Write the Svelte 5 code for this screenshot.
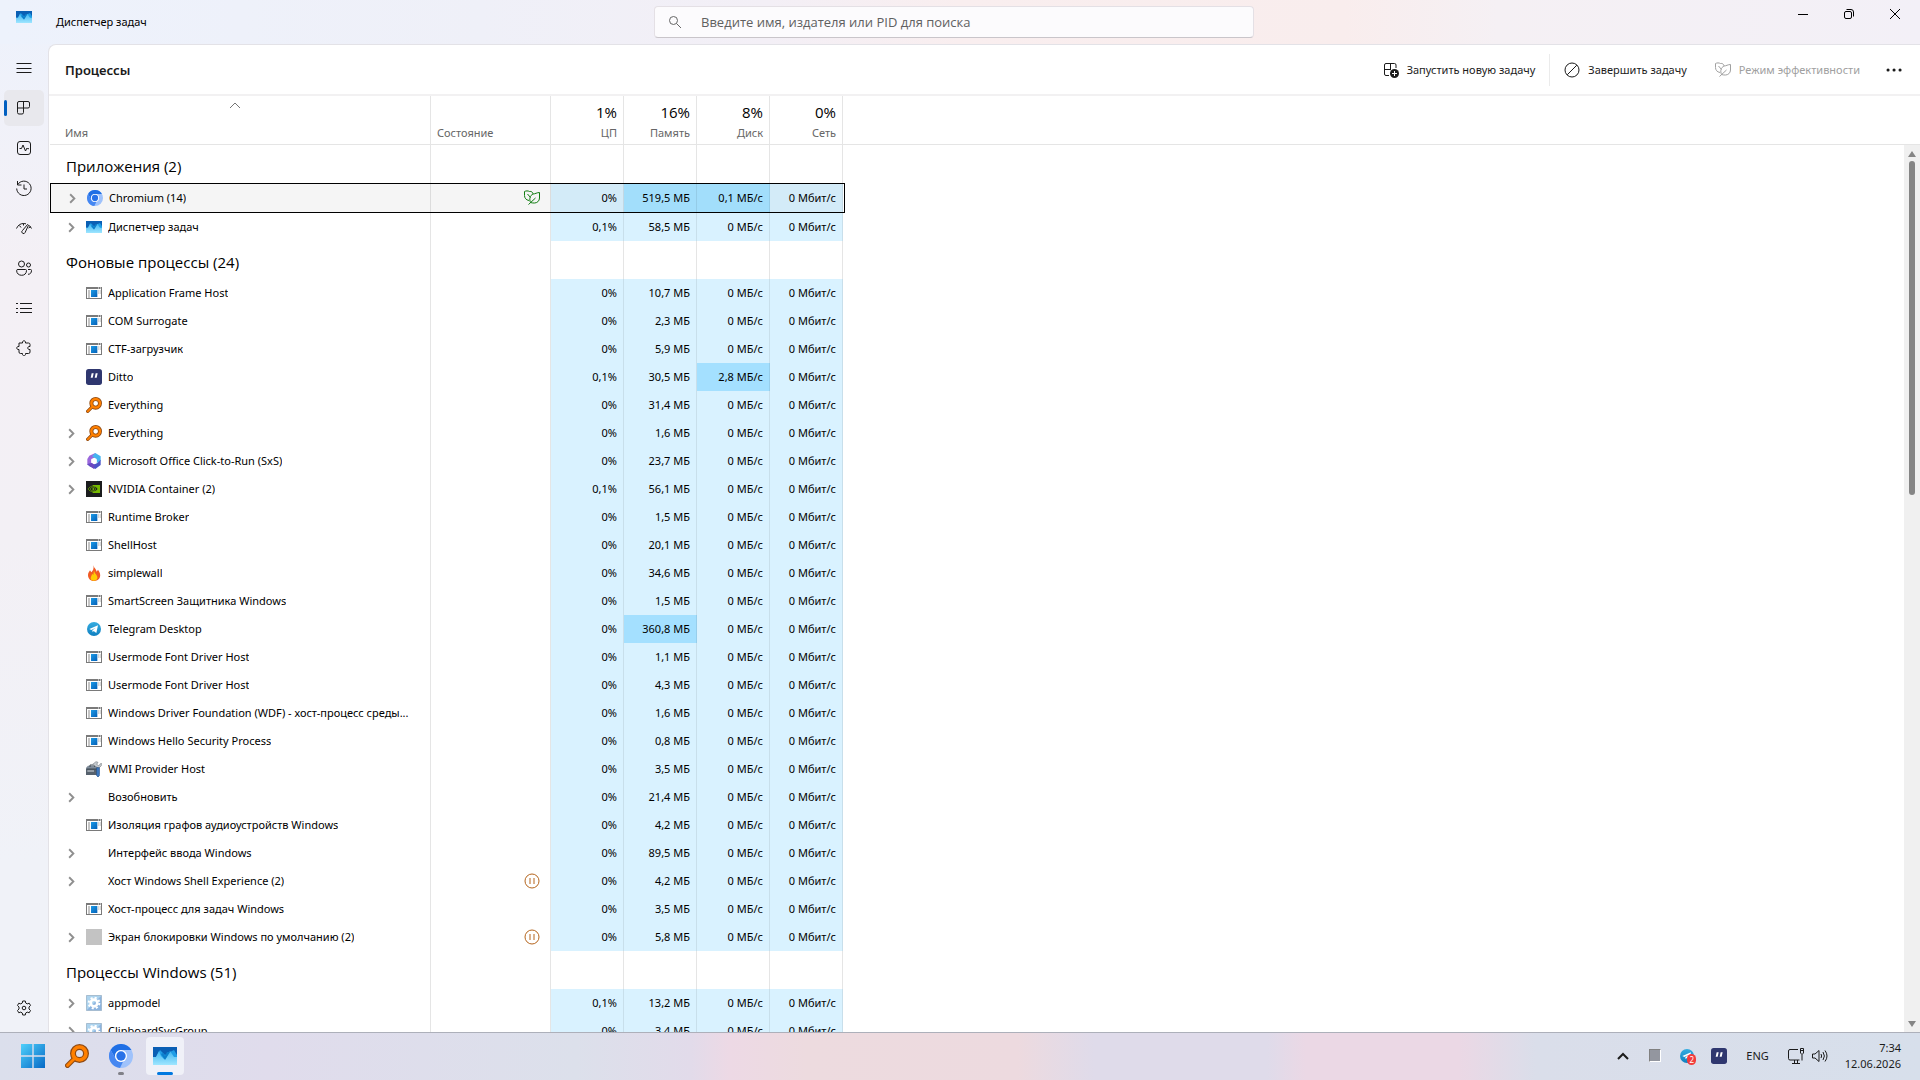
<script>
    let search = $state("")
    let page = $state("processes")
    let selected = $state("Chromium (14)")

    const pages = [
        { id: "processes", title: "Процессы" },
        { id: "performance", title: "Производительность" },
        { id: "history", title: "Журнал приложений" },
        { id: "startup", title: "Автозагрузка приложений" },
        { id: "users", title: "Пользователи" },
        { id: "details", title: "Подробности" },
        { id: "services", title: "Службы" },
    ]

    const columns = [
        { total: "1%", title: "ЦП" },
        { total: "16%", title: "Память" },
        { total: "8%", title: "Диск" },
        { total: "0%", title: "Сеть" },
    ]

    // hot = indexes of the value cells with a darker background
    function proc(name, icon, expand, cpu, mem, disk = "0", status = "", hot = []) {
        return { name, icon, expand, status, hot, cells: [cpu + "%", mem + " МБ", disk + " МБ/с", "0 Мбит/с"] }
    }

    const groups = [
        {
            title: "Приложения (2)",
            rows: [
                proc("Chromium (14)", "chromium", true, "0", "519,5", "0,1", "leaf", [1, 2]),
                proc("Диспетчер задач", "taskmgr", true, "0,1", "58,5"),
            ],
        },
        {
            title: "Фоновые процессы (24)",
            rows: [
                proc("Application Frame Host", "exe", false, "0", "10,7"),
                proc("COM Surrogate", "exe", false, "0", "2,3"),
                proc("CTF-загрузчик", "exe", false, "0", "5,9"),
                proc("Ditto", "ditto", false, "0,1", "30,5", "2,8", "", [2]),
                proc("Everything", "everything", false, "0", "31,4"),
                proc("Everything", "everything", true, "0", "1,6"),
                proc("Microsoft Office Click-to-Run (SxS)", "office", true, "0", "23,7"),
                proc("NVIDIA Container (2)", "nvidia", true, "0,1", "56,1"),
                proc("Runtime Broker", "exe", false, "0", "1,5"),
                proc("ShellHost", "exe", false, "0", "20,1"),
                proc("simplewall", "flame", false, "0", "34,6"),
                proc("SmartScreen Защитника Windows", "exe", false, "0", "1,5"),
                proc("Telegram Desktop", "telegram", false, "0", "360,8", "0", "", [1]),
                proc("Usermode Font Driver Host", "exe", false, "0", "1,1"),
                proc("Usermode Font Driver Host", "exe", false, "0", "4,3"),
                proc("Windows Driver Foundation (WDF) - хост-процесс среды...", "exe", false, "0", "1,6"),
                proc("Windows Hello Security Process", "exe", false, "0", "0,8"),
                proc("WMI Provider Host", "toolbox", false, "0", "3,5"),
                proc("Возобновить", "none", true, "0", "21,4"),
                proc("Изоляция графов аудиоустройств Windows", "exe", false, "0", "4,2"),
                proc("Интерфейс ввода Windows", "none", true, "0", "89,5"),
                proc("Хост Windows Shell Experience (2)", "none", true, "0", "4,2", "0", "paused"),
                proc("Хост-процесс для задач Windows", "exe", false, "0", "3,5"),
                proc("Экран блокировки Windows по умолчанию (2)", "gray", true, "0", "5,8", "0", "paused"),
            ],
        },
        {
            title: "Процессы Windows (51)",
            rows: [
                proc("appmodel", "service", true, "0,1", "13,2"),
                proc("ClipboardSvcGroup", "service", true, "0", "3,4"),
            ],
        },
    ]
</script>

{#snippet line(name)}
    <svg class="line" viewBox="0 0 16 16" aria-hidden="true">
        {#if name === "menu"}
            <path d="M.5 3.5h15M.5 8.5h15M.5 12.5h15" />
        {:else if name === "processes"}
            <path d="M3 1.5h9q1.5 0 1.5 1.5v3.5q0 1.5-1.5 1.5H7.5v4.5q0 1.5-1.5 1.5H3q-1.5 0-1.5-1.5V3q0-1.5 1.5-1.5zM1.5 8h6M7.5 1.5V8" />
        {:else if name === "performance"}
            <rect x="1.5" y="1.5" width="13" height="13" rx="2.5" />
            <path d="M3.5 8.5h2L7 5l2.5 6L11 8l.6.7H13" />
        {:else if name === "history"}
            <path d="M1.8 4.5A7.2 7.2 0 1 1 .7 8.5M1.5 1v4h4M8 4.5V9h3" />
        {:else if name === "startup"}
            <path d="M.5 8.5C2 5 4.5 3.5 7.5 3.5c1 0 1.8.1 2.5.4M13 5.5c1 .7 1.8 1.7 2.5 3M3.5 5.5l1.5 2M7.5 3.5v2M11.5 4.5l-5 6a1.7 1.7 0 1 0 2.6 2L12.5 5.2zM12.5 8 15 6.5" />
        {:else if name === "users"}
            <circle cx="5.5" cy="4" r="3" />
            <circle cx="12.5" cy="5" r="2" />
            <path d="M2 9.5h7.5q1 0 1 1c0 3-2 4.8-4.8 4.8S.6 13.5.6 10.5q0-1 1.4-1zM12 9.5h2.5q1 0 1 1c0 2.4-1.3 3.8-3.5 3.8" />
        {:else if name === "details"}
            <path d="M4 3.5h12M4 8.5h12M4 12.5h12M0 3.5h2M0 8.5h2M0 12.5h2" />
        {:else if name === "services"}
            <path d="M3 3h3.5c-.5-3 3.5-3 3 0h3q1.5 0 1.5 1.5v2c-3-.5-3 3.5 0 3V12q0 1.5-1.5 1.5h-3c.5 3-3.5 3-3 0h-2Q3 13.5 3 12V9.5c-3 .5-3-3.5 0-3z" />
        {:else if name === "settings"}
            <path d="M6.7 1h2.6l.4 2 1.5.9 2-.7 1.3 2.2L13 7v2l1.5 1.5-1.3 2.3-2-.7-1.5.9-.4 2H6.7l-.4-2-1.5-.9-2 .7-1.3-2.3L3 9V7L1.5 5.4l1.3-2.2 2 .7L6.3 3z" />
            <circle cx="8" cy="8" r="1.8" />
        {:else if name === "search"}
            <circle cx="6.5" cy="6.5" r="4" />
            <path d="m9.5 9.5 4.5 4.5" />
        {:else if name === "run"}
            <path d="M6 13.5H3q-1.5 0-1.5-1.5V3q0-1.5 1.5-1.5h8.5Q13 1.5 13 3v3M1.5 7.5H8M7.5 1.5v6" />
            <circle cx="11.5" cy="11.5" r="4.5" fill="#1b1b1b" stroke="none" />
            <path d="M11.5 9v5M9 11.5h5" stroke="#fff" />
        {:else if name === "end"}
            <circle cx="8" cy="8" r="7" />
            <path d="m3.2 12.8 9.6-9.6" />
        {:else if name === "leaf"}
            <path d="M5 10.5C2 10 .5 8 .5 5.5v-4C2 .7 4 .7 5.5 1.5 7.5 1.2 8.5 2 9 3.8M6.5 12.5C5 9 6 5.5 9 4c2 0 4-1.5 6.500-1.500V8c0 3-2.500 5-5 5-1.500 0-2.500 0-4-.5zM4.500 14.500 11.500 8M3.500 4l3 3.500" />
        {:else if name === "more"}
            <path d="M2 8h.1M8 8h.1M14 8h.1" stroke-width="3" stroke-linecap="round" />
        {:else if name === "minimize"}
            <path d="M3 8.5h10" />
        {:else if name === "restore"}
            <rect x="3.5" y="5.5" width="7" height="7" rx="1.5" />
            <path d="M5.5 3.5H10q2.5 0 2.5 2.5v4.5" />
        {:else if name === "close"}
            <path d="m3 3 10 10M13 3 3 13" />
        {:else if name === "up"}
            <path d="m3 11 5-5 5 5" />
        {:else if name === "right"}
            <path d="m5.5 3.5 4.5 4.5-4.5 4.5" />
        {:else if name === "paused"}
            <circle cx="8" cy="8" r="7" />
            <path d="M6 5v6M10 5v6" />
        {:else if name === "network"}
            <path d="M10 1.5H2Q.5 1.5.5 3v7.5Q.5 12 2 12h9.5M4 15.5h8M6.5 12v3.5M9.5 12v3.5M12.5.5h3V5L14 6.5 12.5 5zM12.5 2.5h3M14 6.5v6" />
        {:else if name === "volume"}
            <path d="M.5 6v4H3l4 3.5v-11L3 6zM9 6q1.3 2 0 4M11 4q2.8 4 0 8M13 2.5q4 5.500 0 11" />
        {/if}
    </svg>
{/snippet}

{#snippet pic(name)}
    <svg class="pic" viewBox="0 0 24 24" aria-hidden="true">
        {#if name === "exe"}
            <path d="M0 3h24v18H0z" fill="#7a7a7a" />
            <path d="M1.5 6h21v13.5h-21z" fill="#fff" />
            <path d="M7.5 7.5H17V18H7.5z" fill="url(#blue)" />
            <path d="M3 9h3M3 12h3M3 15h3M3 18h3M18.5 9H20M18.5 12H20M21 9h1M21 12h1" stroke="#8b8b8b" stroke-width="1.5" />
            <path d="M18 4.5h1.5M21 4.5h1.5" stroke="#fff" stroke-width="1.5" />
        {:else if name === "taskmgr"}
            <path d="M0 3h24v18H0z" fill="#0a5fb4" />
            <path d="M0 13h3l4-7 5 5 5-3 4-2 3 5v10H0z" fill="#1f9de6" />
            <path d="M0 13h3l3-6 2 5 3 3 2-1 4-7 4 6h3v8H0z" fill="url(#sky)" />
            <path d="m8 10 4 6 5-8h-3l-2 4-2-3z" fill="#0c7fcb" />
        {:else if name === "chromium"}
            <circle cx="12" cy="12" r="12" fill="#9fc2fb" />
            <path d="M1.6 6A12 12 0 0 1 22.4 6H12a6 6 0 0 0-5.2 9z" fill="#1f6fe5" />
            <path d="M1.6 6 6.8 15A6 6 0 0 0 14 17.7L11 24A12 12 0 0 1 1.6 6z" fill="#4587f1" />
            <circle cx="12" cy="12" r="6" fill="#fff" />
            <circle cx="12" cy="12" r="4.7" fill="#2872e8" />
        {:else if name === "ditto"}
            <rect width="24" height="24" rx="4" fill="#2f376f" />
            <path d="M8.5 6.5h3L10 13H7zM14.5 6.5h3L16 13h-3z" fill="#fff" />
        {:else if name === "everything"}
            <path d="m2.5 21.5 7-7" stroke="#8f4a13" stroke-width="5" stroke-linecap="round" />
            <circle cx="14.5" cy="9.5" r="6.5" fill="none" stroke="#8f4a13" stroke-width="6" />
            <path d="m2.5 21.5 7.5-7.5" stroke="#ff8000" stroke-width="2.8" stroke-linecap="round" />
            <circle cx="14.5" cy="9.5" r="6.5" fill="none" stroke="#ff8000" stroke-width="3.6" />
        {:else if name === "office"}
            <path d="M14 0 5 4 2 9v9l6-3V9l7-3z" fill="#9a67dc" />
            <path d="m14 0 8 5v7l-6 3V9L9 5z" fill="#45b4ef" />
            <path d="M22 10v8l-8 6-9-4-3-3 6-2 5 2 4-2z" fill="#4c55c8" />
            <path d="m2 17 6-2 5 2-1 7z" fill="#6d49c0" />
            <path d="m12 8 4 2v4l-4 3-4-3v-4z" fill="#fff" />
        {:else if name === "nvidia"}
            <path d="M0 0h24v24H0z" fill="#1b1c1e" />
            <path d="M10 6h11v12H10z" fill="#76b900" />
            <path d="M3 12c4-5.5 10-6 15 0-5 6-11 5-15 0z" fill="#1b1c1e" stroke="#76b900" />
            <path d="M6 12c3-4 7-3 9 0-3 4-7 3-9 0z" fill="none" stroke="#76b900" />
            <circle cx="11" cy="12" r="1.5" fill="#76b900" />
        {:else if name === "flame"}
            <path d="M11 0c1 5 4 5 5 10l2-3c3 4 4 7 3 11-1 4-5 6-9 6-6 0-9-4-9-9 0-3 2-5 3-7l2 3c3-3 4-6 3-11z" fill="#f15a24" />
            <path d="M12 8c0 5 6 7 5 12-1 5-10 5-10 0 0-3 2-4 2-7l2 2z" fill="#ffcb05" />
        {:else if name === "telegram"}
            <circle cx="12" cy="12" r="10.5" fill="url(#tg)" />
            <path d="m5 12 13-5.5L15.5 18l-4-3-1.5 2-.5-3 5-4L8 13.5z" fill="#fff" />
        {:else if name === "toolbox"}
            <path d="M0 10 3 7h17v12l-2 2H0z" fill="#7e8b99" />
            <path d="M0 12h18v9H0z" fill="#56616d" />
            <path d="M6 9V6h7v3M1 12h16" fill="none" stroke="#3d4650" stroke-width="1.5" />
            <path d="M2 15h10" stroke="#d4dbe1" stroke-width="1.5" />
            <path d="m10 5 5-4 3 1-2 3 3 2 4-4v4l-4 4-5-3z" fill="#c5cacf" stroke="#7d8489" />
            <path d="M16 10h4v12l-2 2-2-2z" fill="#3f7cc4" stroke="#234f86" />
        {:else if name === "gray"}
            <path d="M0 0h24v24H0z" fill="#c3c3c3" />
        {:else if name === "service"}
            <path d="M.7.7h22.6v22.6H.7z" fill="#8cb4df" stroke="#a3b9cc" stroke-width="1.4" />
            <path d="M1.4 1.4h21.2L1.4 22.6z" fill="#acd3ee" />
            <circle cx="12" cy="12" r="8" fill="none" stroke="#fff" stroke-width="3" stroke-dasharray="3.14" />
            <circle cx="12" cy="12" r="5" fill="none" stroke="#fff" stroke-width="4" />
        {:else if name === "start"}
            <path d="M0 0h11.3v11.3H0zM12.7 0H24v11.3H12.7zM0 12.7h11.3V24H0zM12.7 12.7H24V24H12.7z" fill="url(#win)" />
        {/if}
    </svg>
{/snippet}

<svg class="defs" aria-hidden="true">
    <defs>
        <linearGradient id="blue" x2="1" y2="1"><stop stop-color="#1d9be6" /><stop offset="1" stop-color="#0460b8" /></linearGradient>
        <linearGradient id="sky" x2="0" y2="1"><stop stop-color="#3fb5f1" /><stop offset="1" stop-color="#9fe6ff" /></linearGradient>
        <linearGradient id="tg" x2="0" y2="1"><stop stop-color="#35ade1" /><stop offset="1" stop-color="#0f7fc0" /></linearGradient>
        <linearGradient id="win" x2="1" y2="1"><stop stop-color="#4fd0fb" /><stop offset="1" stop-color="#0669c6" /></linearGradient>
    </defs>
</svg>

<div class="desktop">
    <header class="titlebar">
        <div class="app-title">
            {@render pic("taskmgr")}
            <span>Диспетчер задач</span>
        </div>
        <label class="search">
            {@render line("search")}
            <input type="text" bind:value={search} placeholder="Введите имя, издателя или PID для поиска" aria-label="Поиск">
        </label>
        <div class="window-buttons">
            <button aria-label="Свернуть">{@render line("minimize")}</button>
            <button aria-label="Восстановить">{@render line("restore")}</button>
            <button aria-label="Закрыть">{@render line("close")}</button>
        </div>
    </header>

    <div class="window">
        <nav>
            <button aria-label="Меню">{@render line("menu")}</button>
            {#each pages as p}
                <button class:active={page === p.id} aria-label={p.title} onclick={() => page = p.id}>{@render line(p.id)}</button>
            {/each}
            <button class="last" aria-label="Параметры">{@render line("settings")}</button>
        </nav>

        <main>
            <div class="commands">
                <h1>Процессы</h1>
                <button>{@render line("run")}Запустить новую задачу</button>
                <i></i>
                <button>{@render line("end")}Завершить задачу</button>
                <button disabled>{@render line("leaf")}Режим эффективности</button>
                <button class="more" aria-label="Дополнительно">{@render line("more")}</button>
            </div>

            <div class="content">
                <div class="list">
                    <table>
                        <colgroup>
                            <col class="c-name">
                            <col class="c-status">
                            {#each columns as c}
                                <col class="c-value">
                            {/each}
                            <col>
                        </colgroup>
                        <thead>
                            <tr>
                                <th>
                                    <span class="sort">{@render line("up")}</span>
                                    <span class="title">Имя</span>
                                </th>
                                <th class="status"><span class="title">Состояние</span></th>
                                {#each columns as c}
                                    <th class="value">
                                        <span class="total">{c.total}</span>
                                        <span class="title">{c.title}</span>
                                    </th>
                                {/each}
                                <td></td>
                            </tr>
                        </thead>
                        <tbody>
                            {#each groups as group}
                                <tr class="group">
                                    <th>{group.title}</th>
                                    <td></td>
                                    {#each columns as c}
                                        <td></td>
                                    {/each}
                                    <td></td>
                                </tr>
                                {#each group.rows as row}
                                    <tr class="process" class:selected={selected === row.name} onclick={() => selected = row.name}>
                                        <td class="name">
                                            <div>
                                                {#if row.expand}
                                                    <button class="expand" aria-label="Развернуть">{@render line("right")}</button>
                                                {:else}
                                                    <span class="expand"></span>
                                                {/if}
                                                {@render pic(row.icon)}
                                                <span class="label">{row.name}</span>
                                            </div>
                                        </td>
                                        <td class="status {row.status}">
                                            {#if row.status}{@render line(row.status)}{/if}
                                        </td>
                                        {#each row.cells as cell, i}
                                            <td class="value" class:hot={row.hot.includes(i)}>{cell}</td>
                                        {/each}
                                        <td></td>
                                    </tr>
                                {/each}
                            {/each}
                        </tbody>
                    </table>
                </div>
                <div class="scroll">
                    <div class="scroll-head"></div>
                    <div class="scrollbar">
                        <svg viewBox="0 0 8 6"><path d="M4 0 8 6H0z" /></svg>
                        <div class="track"><div class="thumb"></div></div>
                        <svg viewBox="0 0 8 6"><path d="M0 0h8L4 6z" /></svg>
                    </div>
                </div>
            </div>
        </main>
    </div>

    <footer class="taskbar">
        <div class="apps">
            <button aria-label="Пуск">{@render pic("start")}</button>
            <button aria-label="Everything">{@render pic("everything")}</button>
            <button class="running" aria-label="Chromium">{@render pic("chromium")}</button>
            <button class="running current" aria-label="Диспетчер задач">{@render pic("taskmgr")}</button>
        </div>
        <div class="tray">
            <button class="hidden-icons" aria-label="Скрытые значки">{@render line("up")}</button>
            <button aria-label="simplewall"><span class="square"></span></button>
            <button aria-label="Telegram">{@render pic("telegram")}<span class="badge">2</span></button>
            <button aria-label="Ditto">{@render pic("ditto")}</button>
            <button class="lang">ENG</button>
            <button class="system" aria-label="Сеть и звук">{@render line("network")}{@render line("volume")}</button>
            <button class="clock"><span>7:34</span><span>12.06.2026</span></button>
        </div>
    </footer>
</div>

<style>
    :global(body) {
        margin: 0;
        overflow: hidden;
    }

    .desktop {
        display: flex;
        flex-direction: column;
        height: 100vh;
        font-family: "Noto Sans", "Open Sans", sans-serif;
        font-size: 11px;
        line-height: 16px;
        color: #000;
        background: linear-gradient(#edf2fc, #f4f0f5 25%, #f3f0f5 50%, #f0f2f8 80%);
    }

    .defs {
        position: absolute;
        width: 0;
        height: 0;
    }

    button {
        display: flex;
        align-items: center;
        justify-content: center;
        padding: 0;
        border: none;
        background: none;
        font: inherit;
        color: inherit;
    }

    .line {
        flex: none;
        width: 16px;
        height: 16px;
        fill: none;
        stroke: currentColor;
    }

    .pic {
        flex: none;
        width: 16px;
        height: 16px;
    }

    .titlebar {
        display: grid;
        grid-template-columns: 1fr 600px 1fr;
        flex: none;
        height: 44px;
        background: linear-gradient(90deg, #edf2fc, #eff0f8 25%, #f3eff6 40%, #f9eeef 50%, #f9eded 70%, #f5f0f4 78%, #f3f0f7);
    }

    .app-title {
        display: flex;
        align-items: center;
        gap: 24px;
        padding-left: 16px;
    }

    .app-title .pic {
        margin-bottom: 10px;
    }

    .search {
        display: flex;
        align-items: center;
        gap: 18px;
        height: 30px;
        margin: 6px 6px 0 -6px;
        padding-left: 12px;
        border: 1px solid #e4e0e5;
        border-bottom-color: #c9c5ca;
        border-radius: 4px;
        background: #fcfbfd;
        color: #666;
    }

    .search input {
        flex: 1;
        padding: 0;
        border: none;
        outline: none;
        background: none;
        font-family: "Open Sans", "Noto Sans", sans-serif;
        font-size: 13px;
    }

    .search input::placeholder {
        color: #606060;
    }

    .window-buttons {
        display: flex;
        justify-content: flex-end;
        padding-right: 2px;
    }

    .window-buttons button {
        width: 46px;
        height: 28px;
    }

    .window {
        display: flex;
        flex: 1;
        min-height: 0;
    }

    nav {
        display: flex;
        flex-direction: column;
        gap: 4px;
        flex: none;
        box-sizing: border-box;
        width: 48px;
        padding: 6px 4px;
        color: #1b1b1b;
    }

    nav button {
        height: 36px;
        border-radius: 5px;
    }

    nav .last {
        margin-top: auto;
    }

    nav .active {
        position: relative;
        background: #e8e8ed;
    }

    nav .active::before {
        content: "";
        position: absolute;
        left: 0;
        width: 3px;
        height: 16px;
        border-radius: 2px;
        background: #005fc0;
    }

    main {
        display: flex;
        flex-direction: column;
        flex: 1;
        min-width: 0;
        border: 1px solid #e3e2e7;
        border-width: 1px 0 0 1px;
        border-radius: 8px 0 0 0;
        background: #fff;
    }

    .commands {
        display: flex;
        align-items: center;
        flex: none;
        height: 49px;
        padding: 0 10px 0 16px;
        border-bottom: 2px solid #f2f1f2;
        color: #1b1b1b;
    }

    .commands h1 {
        flex: 1;
        margin: 0;
        font-size: 13px;
        font-weight: 600;
    }

    .commands button {
        gap: 8px;
        height: 32px;
        padding: 0 14px;
    }

    .commands i {
        height: 32px;
        border-left: 1px solid #ebebeb;
    }

    .commands button:disabled {
        color: #a0a0a0;
    }

    .commands .more {
        width: 32px;
        margin-left: 4px;
        padding: 0;
    }

    .content {
        display: flex;
        flex: 1;
        min-height: 0;
    }

    .list {
        flex: 1;
        min-width: 0;
        margin-left: 1px;
        overflow: hidden;
    }

    table {
        --name: 381px;
        --status: 120px;
        --value: 73px;
        width: 100%;
        table-layout: fixed;
        border-collapse: separate;
        border-spacing: 0;
    }

    .c-name {
        width: var(--name);
    }

    .c-status {
        width: var(--status);
    }

    .c-value {
        width: var(--value);
    }

    th, td {
        box-sizing: border-box;
        padding: 0;
        border-right: 1px solid rgba(0, 0, 0, 0.1);
        text-align: left;
        font-weight: normal;
        white-space: nowrap;
    }

    td:last-child {
        border-right: none;
    }

    thead th, thead td {
        height: 49px;
        border-bottom: 1px solid #e5e5e5;
        vertical-align: bottom;
    }

    thead th {
        padding: 0 6px 3px 15px;
    }

    thead th.status {
        padding-left: 6px;
    }

    thead span {
        display: block;
    }

    .title {
        color: #666;
    }

    .total {
        margin-bottom: 5px;
        font-family: "Open Sans", "Noto Sans", sans-serif;
        font-size: 15px;
    }

    .sort {
        display: flex;
        margin-bottom: 12px;
        padding-right: 20px;
        color: #757575;
    }

    .sort .line {
        display: block;
        margin: 0 auto;
    }

    thead th.value {
        padding-left: 0;
    }

    .value {
        padding-right: 6px;
        text-align: right;
    }

    .group th {
        height: 38px;
        padding: 4px 0 0 16px;
        font-family: "Open Sans", "Noto Sans", sans-serif;
        font-size: 15px;
        line-height: 20px;
    }

    .process td {
        height: 28px;
    }

    .name div {
        display: flex;
        align-items: center;
        padding: 0 4px 0 14px;
    }

    .name .pic {
        margin: 0 6px 0 7px;
    }

    .expand {
        flex: none;
        width: 15px;
        height: 16px;
        color: #8f8f8f;
    }

    .expand .line {
        width: 15px;
        height: 15px;
        stroke-width: 2;
    }

    .label {
        overflow: hidden;
        text-overflow: ellipsis;
    }

    .process .status {
        padding-right: 10px;
        text-align: right;
    }

    .status .line {
        display: block;
        margin-left: auto;
    }

    .leaf {
        color: #107c10;
    }

    .paused {
        color: #b5651d;
    }

    .process .value {
        border-right-color: rgba(0, 0, 0, 0.08);
        background: #d9f2ff;
    }

    .process .value.hot {
        background: #a4e0ff;
    }

    .selected {
        position: relative;
    }

    .selected td {
        height: 30px;
        background: #f5f5f5;
    }

    .process.selected td:last-child {
        background: none;
    }

    .process.selected .value {
        background: #d3ebf8;
    }

    .process.selected .value.hot {
        background: #a2defb;
    }

    .selected .name div {
        padding-left: 15px;
    }

    .selected .name::after {
        content: "";
        position: absolute;
        box-sizing: border-box;
        top: 0;
        bottom: 0;
        left: 0;
        width: calc(var(--name) + var(--status) + 4 * var(--value) + 2px);
        border: 1px solid #000;
    }

    .scroll {
        display: flex;
        flex-direction: column;
        flex: none;
        width: 16px;
    }

    .scroll-head {
        height: 48px;
        border-bottom: 1px solid #e5e5e5;
    }

    .scrollbar {
        display: flex;
        flex-direction: column;
        align-items: center;
        flex: 1;
        padding: 6px 0 5px;
        background: #f0f0f0;
    }

    .scrollbar svg {
        width: 8px;
        height: 6px;
        fill: #858585;
    }

    .track {
        flex: 1;
        padding: 4px 0;
    }

    .thumb {
        width: 6px;
        height: 39%;
        border-radius: 3px;
        background: #858585;
    }

    .taskbar {
        display: flex;
        justify-content: space-between;
        flex: none;
        box-sizing: border-box;
        height: 48px;
        padding: 0 19px 2px 14px;
        border-top: 1px solid #adb0ba;
        background: linear-gradient(90deg, #dbdfec, #e0dcec 14%, #dce0eb 30%, #e2dbea 36%, #edd9e5 38%, #eddbdf 42%, #eddadf 53%, #dfdbea 57%, #dfdbea 66%, #ebd8e5 68%, #ebd8e5 76%, #dadeea 80%, #d7dfeb);
    }

    .apps {
        display: flex;
        align-items: center;
        gap: 6px;
    }

    .apps button {
        position: relative;
        width: 38px;
        height: 38px;
        border-radius: 4px;
    }

    .apps .pic {
        width: 24px;
        height: 24px;
    }

    .running::after {
        content: "";
        position: absolute;
        bottom: 0;
        width: 6px;
        height: 3px;
        border-radius: 2px;
        background: #808088;
    }

    .apps .current {
        background: #f0f1f8;
    }

    .current::after {
        width: 16px;
        background: #0078e0;
    }

    .tray {
        display: flex;
        align-items: center;
        color: #1b1b1b;
    }

    .tray button {
        position: relative;
        width: 32px;
        height: 40px;
    }

    .hidden-icons .line {
        stroke-width: 2;
    }

    .square {
        width: 10px;
        height: 11px;
        border: 1px solid #808080;
        border-right-color: #fff;
        border-bottom-color: #fff;
        background: #93969f;
    }

    .badge {
        position: absolute;
        right: 7px;
        bottom: 11px;
        width: 9px;
        height: 11px;
        border-radius: 5px;
        background: #f23c3c;
        color: #fff;
        font-size: 8px;
        line-height: 11px;
    }

    .tray .lang {
        width: auto;
        padding: 0 11px;
    }

    .tray .system {
        gap: 8px;
        width: auto;
        padding: 0 8px;
    }

    .tray .clock {
        flex-direction: column;
        align-items: flex-end;
        width: auto;
        padding-left: 9px;
    }
</style>
